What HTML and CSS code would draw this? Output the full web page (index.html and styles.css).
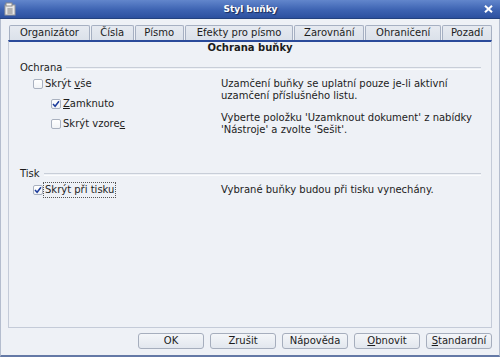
FILE: index.html
```html
<!DOCTYPE html>
<html>
<head>
<meta charset="UTF-8">
<title>Styl buňky</title>
<link rel="stylesheet" href="styles.css">
</head>
<body>
<div class="window">
	<div class="titlebar">
		<svg class="appicon" width="14" height="14" viewBox="0 0 14 14">
			<rect x="2" y="3" width="10" height="10" fill="#e8e8e8" stroke="#9a9a9a"/>
			<rect x="3" y="1" width="6" height="3" fill="#f4f4f4" stroke="#8a8a8a"/>
			<path d="M4 7h6M4 9h6M4 11h6M6 6v6M8 6v6" stroke="#8a8a8a" stroke-width="0.7"/>
		</svg>
		<span class="title">Styl buňky</span>
		<svg class="close" width="9" height="8" viewBox="0 0 9 8">
			<path d="M1 0.8L8 7.2M8 0.8L1 7.2" stroke="#fff" stroke-width="2"/>
		</svg>
	</div>

	<div class="content">
		<div class="tabs">
			<div class="tab w1">Organizátor</div>
			<div class="tab w2">Čísla</div>
			<div class="tab w3">Písmo</div>
			<div class="tab w4">Efekty pro písmo</div>
			<div class="tab w5">Zarovnání</div>
			<div class="tab w6">Ohraničení</div>
			<div class="tab w7">Pozadí</div>
		</div>

		<div class="panel">
			<div class="heading">Ochrana buňky</div>

			<div class="section">
				<div class="legend"><span>Ochrana</span><div class="rule"></div></div>
				<div class="cols">
					<div class="left">
						<div class="item"><span class="box"></span><span>Skrýt <u>v</u>še</span></div>
						<div class="item sub"><span class="box"><svg width="8" height="8" viewBox="0 0 8 8"><path d="M1 4L3.1 6.3L7 1.2" fill="none" stroke="#1c3c9c" stroke-width="1.5"/></svg></span><span><u>Z</u>amknuto</span></div>
						<div class="item sub"><span class="box"></span><span>Skrýt vzore<u>c</u></span></div>
					</div>
					<div class="right">
						<p>Uzamčení buňky se uplatní pouze je-li aktivní<br>uzamčení příslušného listu.</p>
						<p>Vyberte položku 'Uzamknout dokument' z nabídky<br>'Nástroje' a zvolte 'Sešit'.</p>
					</div>
				</div>
			</div>

			<div class="section print">
				<div class="legend"><span>Tisk</span><div class="rule"></div></div>
				<div class="cols">
					<div class="left">
						<div class="item"><span class="box"><svg width="8" height="8" viewBox="0 0 8 8"><path d="M1 4L3.1 6.3L7 1.2" fill="none" stroke="#1c3c9c" stroke-width="1.5"/></svg></span><span class="focus">Skrýt při tisku</span></div>
					</div>
					<div class="right">
						<p>Vybrané buňky budou při tisku vynechány.</p>
					</div>
				</div>
			</div>
		</div>

		<div class="buttons">
			<button type="button">OK</button>
			<button type="button">Zrušit</button>
			<button type="button">Nápověda</button>
			<button type="button"><u>O</u>bnovit</button>
			<button type="button"><u>S</u>tandardní</button>
		</div>
	</div>
</div>
</body>
</html>
```

FILE: styles.css
```css
body {margin: 0;
		font-family: "DejaVu Sans", sans-serif;
		font-size: 10px;
		color: #1c1c1c;}

.window {width: 500px;
		height: 357px;
		box-sizing: border-box;
		background-color: #eef1f6;
		border-left: 1px solid #b4bdce;
		border-right: 1px solid #b4bdce;
		border-bottom: 2px solid #6479a6;
		display: flex;
		flex-direction: column;}

.titlebar {height: 18px;
		margin: 0 -1px;
		background: linear-gradient(#6286cc, #3d63b2 55%, #2c509f);
		border-bottom: 1px solid #23427f;
		display: flex;
		align-items: center;}

.appicon {margin-left: 3px;}

.title {flex: 1;
		text-align: center;
		color: #fff;
		font-weight: bold;
		font-size: 9px;
		text-shadow: 1px 1px 1px #1a2a55;}

.close {margin-right: 7px;}

.content {flex: 1;
		padding: 6px 7px 0 7px;
		display: flex;
		flex-direction: column;}

/* zalozky */
.tabs {display: flex;
		padding-left: 1px;
		height: 15px;}

.tab {height: 15px;
		box-sizing: border-box;
		border: 1px solid #a6b0c2;
		border-bottom: none;
		border-radius: 2px 2px 0 0;
		background: linear-gradient(#e6eaf1, #dbe1ea);
		text-align: center;
		line-height: 14px;
		margin-right: 1px;}

.w1 {width: 81px;}
.w2 {width: 43px;}
.w3 {width: 49px;}
.w4 {width: 109px;}
.w5 {width: 70px;}
.w6 {width: 76px;}
.w7 {width: 50px; margin-right: 0;}

.panel {height: 288px;
		box-sizing: border-box;
		border: 1px solid #c4cbd8;
		border-top: 2px solid #2a4a9a;
		background-color: #eef1f6;}

.heading {text-align: center;
		font-weight: bold;
		line-height: 11px;}

.section {padding: 8px 10px 0 11px;}

.legend {display: flex;
		align-items: center;
		line-height: 14px;}

.rule {flex: 1;
		height: 1px;
		margin-left: 4px;
		border-top: 1px solid #c8ced8;
		border-bottom: 1px solid #fbfcfd;}

.cols {display: flex;
		margin-top: 3px;}

.left {width: 201px;
		flex-shrink: 0;
		box-sizing: border-box;
		padding-left: 13px;
		display: flex;
		flex-direction: column;
		gap: 8px;}

.item {display: flex;
		align-items: center;
		height: 12px;
		line-height: 12px;}

.item.sub {padding-left: 18px;}

.box {width: 8px;
		height: 8px;
		border: 1px solid #a9b1bf;
		border-radius: 2px;
		background: linear-gradient(#ffffff, #f1f3f6);
		margin-right: 2px;
		display: flex;
		align-items: center;
		justify-content: center;}

.focus {outline: 1px dotted #555;
		outline-offset: 1px;}

.right {white-space: nowrap;}

.right p {margin: 0;
		line-height: 12px;}

.right p + p {margin-top: 10px;}

.print {padding-top: 31px;}

.buttons {display: flex;
		justify-content: flex-end;
		gap: 6px;
		padding-top: 5px;}

button {width: 66px;
		height: 16px;
		font-family: "DejaVu Sans", sans-serif;
		font-size: 10px;
		line-height: 14px;
		color: #1c1c1c;
		border: 1px solid #a6aebd;
		border-radius: 3px;
		background: linear-gradient(#f4f6f9, #e2e7ee);
		padding: 0;}
```
